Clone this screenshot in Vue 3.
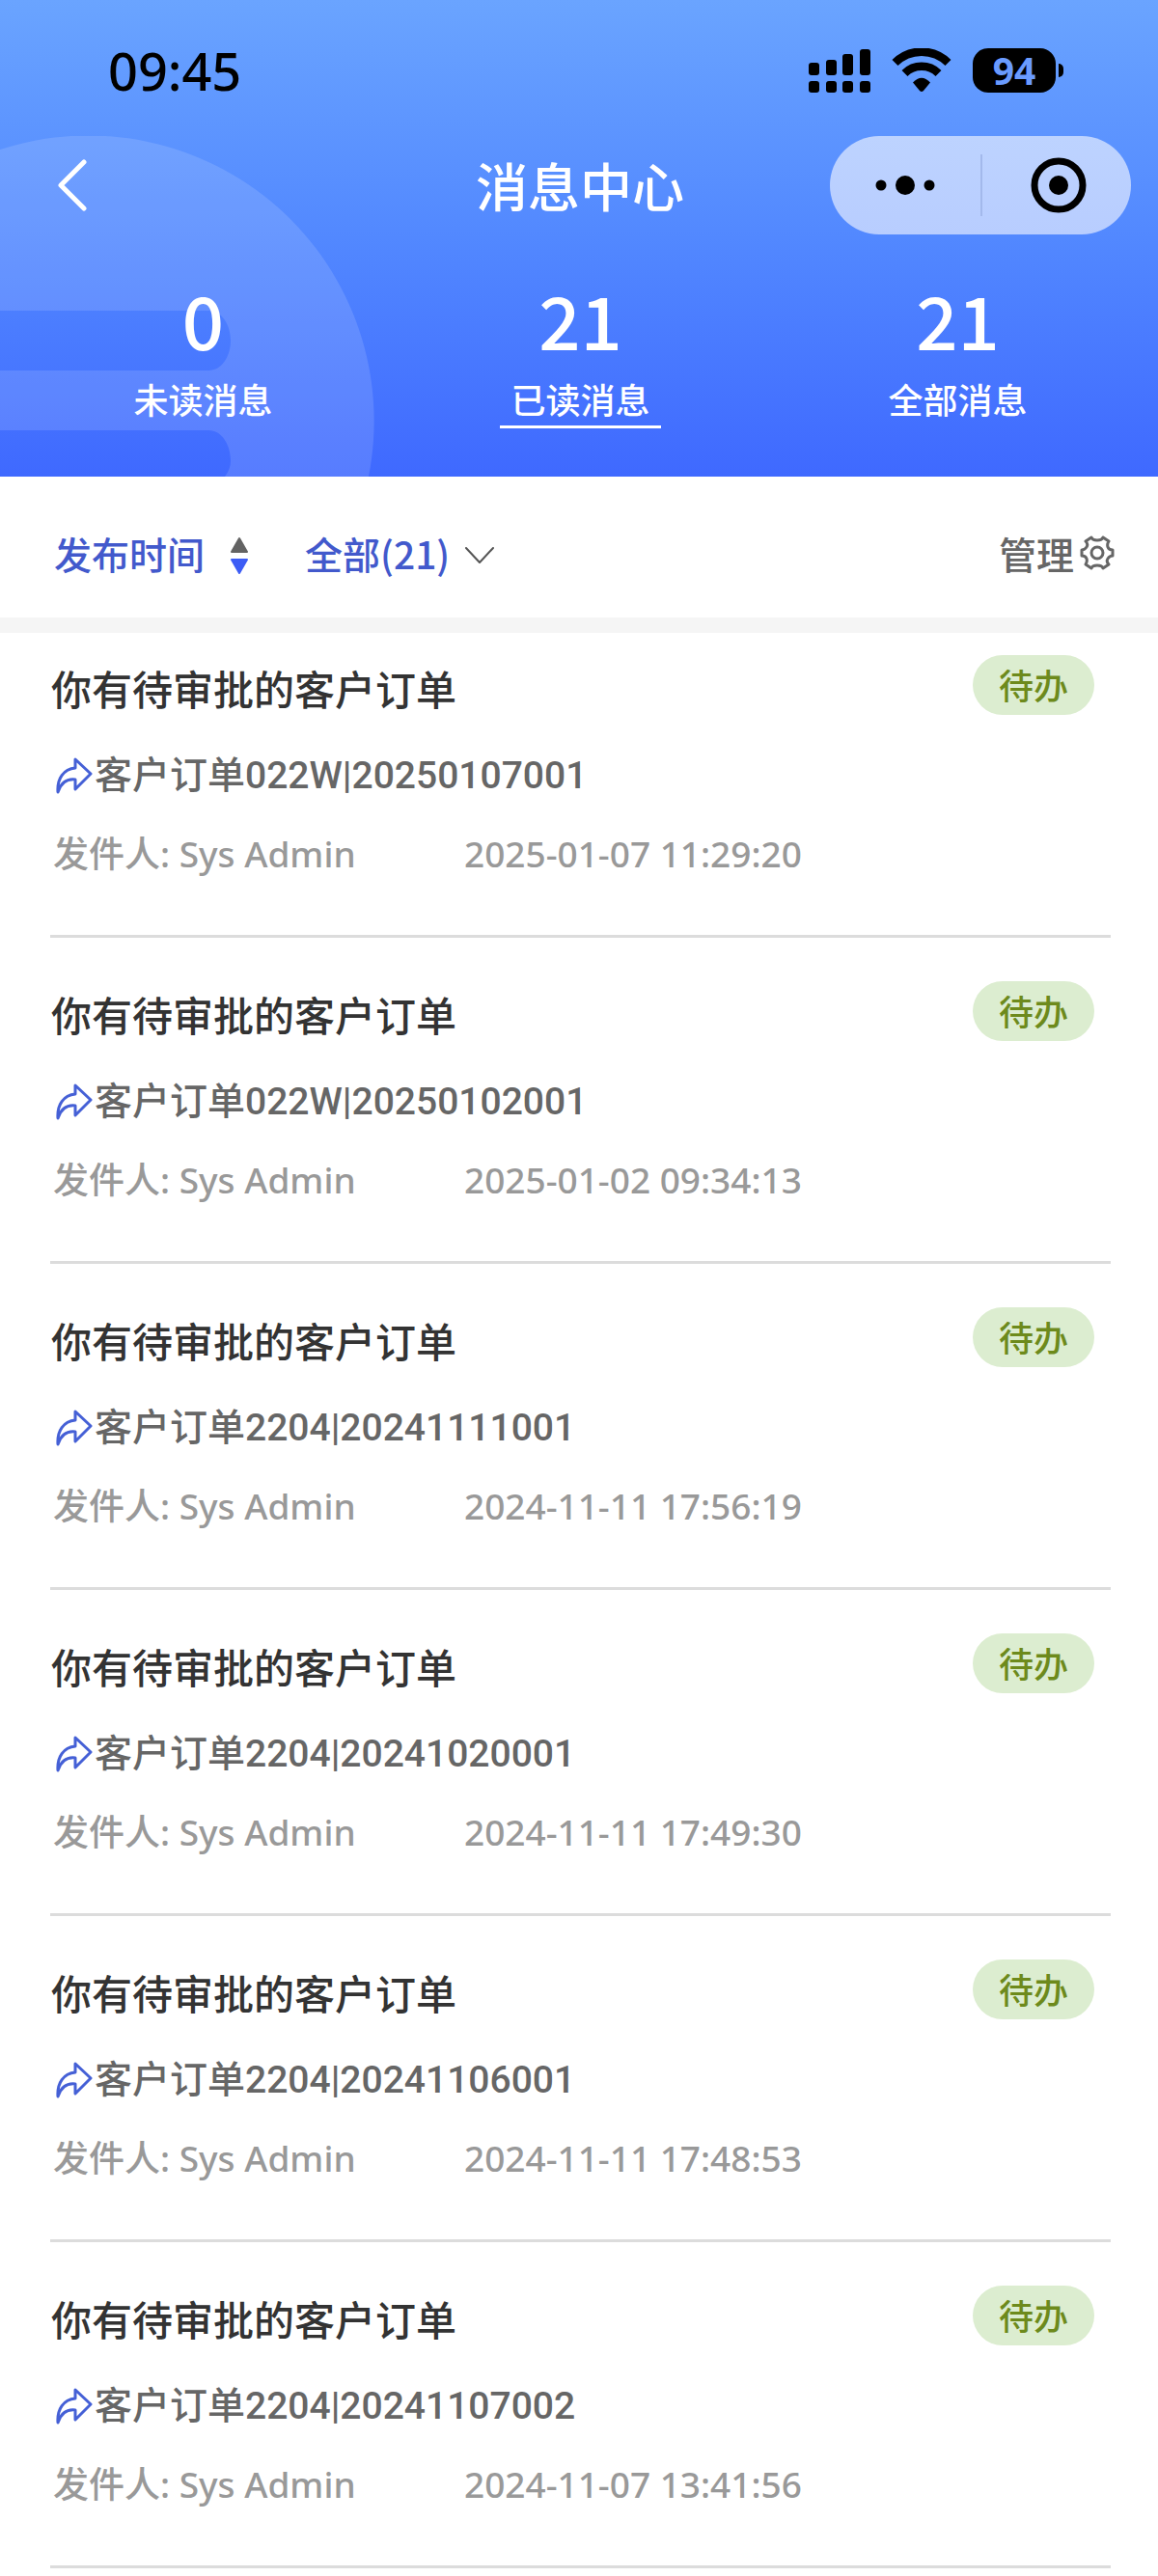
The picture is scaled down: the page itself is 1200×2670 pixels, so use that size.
<script setup>
import { ref } from 'vue'

const activeTab = ref('read')
const filter = ref('all')

const tabs = [
  { key: 'unread', count: 0, label: '未读消息' },
  { key: 'read', count: 21, label: '已读消息' },
  { key: 'all', count: 21, label: '全部消息' }
]

const messages = [
  { order: '客户订单022W|20250107001', time: '2025-01-07 11:29:20' },
  { order: '客户订单022W|20250102001', time: '2025-01-02 09:34:13' },
  { order: '客户订单2204|20241111001', time: '2024-11-11 17:56:19' },
  { order: '客户订单2204|20241020001', time: '2024-11-11 17:49:30' },
  { order: '客户订单2204|20241106001', time: '2024-11-11 17:48:53' },
  { order: '客户订单2204|20241107002', time: '2024-11-07 13:41:56' }
]
</script>

<template>
  <div class="page">
    <header class="hero">
      <svg class="hero-art" width="400" height="353" viewBox="0 0 400 353" aria-hidden="true">
        <path
          fill="#fff"
          fill-opacity="0.13"
          d="M0 14A296 296 0 0 1 382 353H233Q239 345 239 337C239 320 230 305 216 305H0V243H216C230 243 239 228 239 212S230 181 216 181H0Z"
        />
      </svg>

      <div class="status-bar">
        <time class="clock">09:45</time>
        <div class="status-icons">
          <svg width="64" height="46" viewBox="0 0 64 46" aria-label="信号">
            <rect x="0" y="15" width="11" height="13" rx="3" />
            <rect x="18" y="12" width="11" height="16" rx="3" />
            <rect x="35" y="6" width="11" height="22" rx="3" />
            <rect x="53" y="1" width="11" height="27" rx="3" />
            <rect x="0" y="34" width="11" height="12" rx="3" />
            <rect x="18" y="34" width="11" height="12" rx="3" />
            <rect x="35" y="34" width="11" height="12" rx="3" />
            <rect x="53" y="34" width="11" height="12" rx="3" />
          </svg>
          <svg width="62" height="46" viewBox="0 0 62 46" aria-label="无线网络">
            <path d="M3.500 15A39 39 0 0 1 58.500 15" fill="none" stroke="#000" stroke-width="8.500" />
            <path d="M13.500 26A25 25 0 0 1 48.500 26" fill="none" stroke="#000" stroke-width="8.500" />
            <path d="M22 35.500Q31 26 40 35.500L33 44Q31 46 29 44Z" />
          </svg>
          <div class="battery">94</div>
        </div>
      </div>

      <nav class="nav-bar">
        <button class="back" type="button" aria-label="返回">
          <svg width="32" height="54" viewBox="0 0 32 54">
            <path d="M28 3L4 27L28 51" fill="none" stroke="#fff" stroke-width="5" stroke-linecap="round" stroke-linejoin="round" />
          </svg>
        </button>
        <h1>消息中心</h1>
        <div class="capsule">
          <button type="button" aria-label="更多">
            <svg width="64" height="24" viewBox="0 0 64 24">
              <circle cx="7" cy="12" r="5.500" />
              <circle cx="32" cy="12" r="10" />
              <circle cx="57" cy="12" r="5.500" />
            </svg>
          </button>
          <button type="button" aria-label="关闭">
            <svg width="60" height="60" viewBox="0 0 60 60">
              <circle cx="30" cy="30" r="25" fill="none" stroke="#000" stroke-width="7" />
              <circle cx="30" cy="30" r="10" />
            </svg>
          </button>
        </div>
      </nav>

      <div class="tabs">
        <button
          v-for="tab in tabs"
          :key="tab.key"
          type="button"
          class="tab"
          :class="{ active: tab.key === activeTab }"
          @click="activeTab = tab.key"
        >
          <span class="count">{{ tab.count }}</span>
          <span class="tab-label">{{ tab.label }}</span>
        </button>
      </div>
    </header>

    <div class="toolbar">
      <button class="sort" type="button">
        发布时间
        <svg width="20" height="40" viewBox="0 0 20 40" aria-hidden="true">
          <path d="M10 2L18 16H2Z" fill="#636363" stroke="#636363" stroke-width="2" stroke-linejoin="round" />
          <path d="M10 38L18 24H2Z" fill="#3d5df5" stroke="#3d5df5" stroke-width="2" stroke-linejoin="round" />
        </svg>
      </button>
      <label class="filter">
        <select v-model="filter" aria-label="消息类型">
          <option value="all">全部(21)</option>
        </select>
        <svg width="32" height="20" viewBox="0 0 32 20" aria-hidden="true">
          <path d="M2 2L16 17L30 2" fill="none" stroke="#555" stroke-width="2" stroke-linecap="round" stroke-linejoin="round" />
        </svg>
      </label>
      <button class="manage" type="button">
        管理
        <svg width="36" height="36" viewBox="0 0 36 36" fill="none" stroke="#666" stroke-width="3" stroke-linejoin="round" aria-hidden="true">
          <path d="M12 2Q13 5 18 5T24 2L30 6Q28 9 29 12T34 15V21Q31 21 29 24T30 30L24 34Q23 31 18 31T12 34L6 30Q8 27 7 24T2 21V15Q5 15 7 12T6 6Z" />
          <circle cx="18" cy="18" r="6" />
        </svg>
      </button>
    </div>

    <ul class="list">
      <li v-for="item in messages" :key="item.order" class="item">
        <div class="item-head">
          <h2>你有待审批的客户订单</h2>
          <span class="badge">待办</span>
        </div>
        <a class="order" href="#">
          <svg width="38" height="38" viewBox="0 0 38 38" aria-hidden="true">
            <path d="M20 2L36 17L20 33V23C11 22 5 27 2 36C1 22 8 12 20 11Z" fill="none" stroke="#4560d6" stroke-width="3" stroke-linejoin="round" />
          </svg>
          <span>{{ item.order }}</span>
        </a>
        <div class="meta">
          <span class="sender">发件人: Sys Admin</span>
          <time>{{ item.time }}</time>
        </div>
      </li>
    </ul>
  </div>
</template>

<style>
body {
  margin: 0;
  background: #fff;
}
</style>

<style scoped>
.page {
  font-family: "Noto Sans CJK SC", sans-serif;
  font-weight: 500;
  color: #333;
  overflow: hidden;
}

button,
select {
  margin: 0;
  padding: 0;
  border: 0;
  background: none;
  color: inherit;
  font: inherit;
}

svg {
  display: block;
  flex: none;
}

.hero {
  position: relative;
  background: linear-gradient(#6aa4ff, #5288ff 50%, #3f69ff);
  color: #fff;
  padding-bottom: 50px;
}

.hero-art {
  position: absolute;
  left: 0;
  bottom: 0;
}

.status-bar {
  position: relative;
  display: flex;
  align-items: center;
  justify-content: space-between;
  height: 92px;
  padding: 27px 98px 22px 112px;
  color: #000;
}

.clock {
  font-family: "Noto Sans", sans-serif;
  font-size: 54px;
  line-height: 60px;
}

.status-icons {
  display: flex;
  align-items: center;
  gap: 22px;
}

.battery {
  position: relative;
  width: 86px;
  height: 46px;
  margin-right: 8px;
  border-radius: 16px;
  background: #000;
  color: #6a9bff;
  font-family: "Noto Sans", sans-serif;
  font-size: 39px;
  font-weight: 700;
  line-height: 46px;
  text-align: center;
}

.battery::after {
  content: "";
  position: absolute;
  right: -8px;
  top: 16px;
  width: 5px;
  height: 14px;
  border-radius: 0 6px 6px 0;
  background: #000;
}

.nav-bar {
  position: relative;
  display: grid;
  grid-template-columns: 1fr auto 1fr;
  align-items: center;
  height: 102px;
  padding: 0 28px 0 59px;
}

.back {
  justify-self: start;
}

h1 {
  margin: 0 29px 0 0;
  font-size: 54px;
  font-weight: 500;
  line-height: 80px;
}

.capsule {
  display: grid;
  grid-template-columns: 1fr 1fr;
  justify-self: end;
  width: 312px;
  height: 102px;
  border-radius: 51px;
  background: linear-gradient(#bdd3ff, #b8cdff);
}

.capsule button {
  position: relative;
  display: grid;
  place-items: center;
}

.capsule button + button {
  padding-left: 6px;
}

.capsule button + button::before {
  content: "";
  position: absolute;
  left: 0;
  top: 19px;
  bottom: 19px;
  width: 2px;
  background: #a3b9ec;
}

.tabs {
  position: relative;
  display: grid;
  grid-template-columns: repeat(3, 1fr);
  justify-items: center;
  padding: 45px 12px 0 15px;
}

.tab {
  display: flex;
  flex-direction: column;
  align-items: center;
  gap: 13px;
  border-bottom: 3px solid transparent;
  padding: 0 11px;
}

.tab.active {
  border-color: #fff;
}

.count {
  font-size: 76px;
  line-height: 84px;
}

.tab-label {
  font-size: 36px;
  line-height: 56px;
}

.toolbar {
  display: flex;
  align-items: center;
  padding: 49px 45px 37px 56px;
  border-bottom: 16px solid #f5f5f5;
  font-size: 39px;
  line-height: 60px;
  color: #4259cc;
}

.sort {
  display: flex;
  align-items: center;
  gap: 26px;
}

.sort svg,
.filter svg {
  margin-top: 6px;
}

.filter {
  display: flex;
  align-items: center;
  gap: 14px;
  margin-left: 58px;
}

.filter select {
  appearance: none;
  height: 60px;
}

.manage {
  display: flex;
  align-items: center;
  gap: 6px;
  margin-left: auto;
  color: #666;
}

.list {
  margin: 0;
  padding: 0 49px 0 52px;
  list-style: none;
}

.item {
  padding: 45px 0 60px;
  border-bottom: 3px solid #dcdcdc;
}

.item:first-child {
  padding-top: 23px;
}

.item-head {
  display: flex;
  align-items: flex-start;
  justify-content: space-between;
  padding: 0 17px 0 1px;
}

h2 {
  margin: 4px 0 0;
  font-size: 42px;
  font-weight: 500;
  line-height: 60px;
}

.badge {
  width: 126px;
  height: 62px;
  border-radius: 31px;
  background: #dcedd0;
  color: #6d8a1c;
  font-size: 36px;
  line-height: 60px;
  text-align: center;
}

.order {
  display: flex;
  align-items: center;
  margin-top: 33px;
  padding-left: 6px;
  gap: 2px;
  color: #666;
  font-family: Roboto, "Noto Sans CJK SC", sans-serif;
  font-size: 39px;
  line-height: 56px;
  text-decoration: none;
}

.meta {
  display: flex;
  margin-top: 29px;
  padding-left: 3px;
  color: #999;
  font-family: "Noto Sans", "Noto Sans CJK SC", sans-serif;
  font-size: 37px;
  line-height: 48px;
}

.sender {
  width: 426px;
}
</style>
